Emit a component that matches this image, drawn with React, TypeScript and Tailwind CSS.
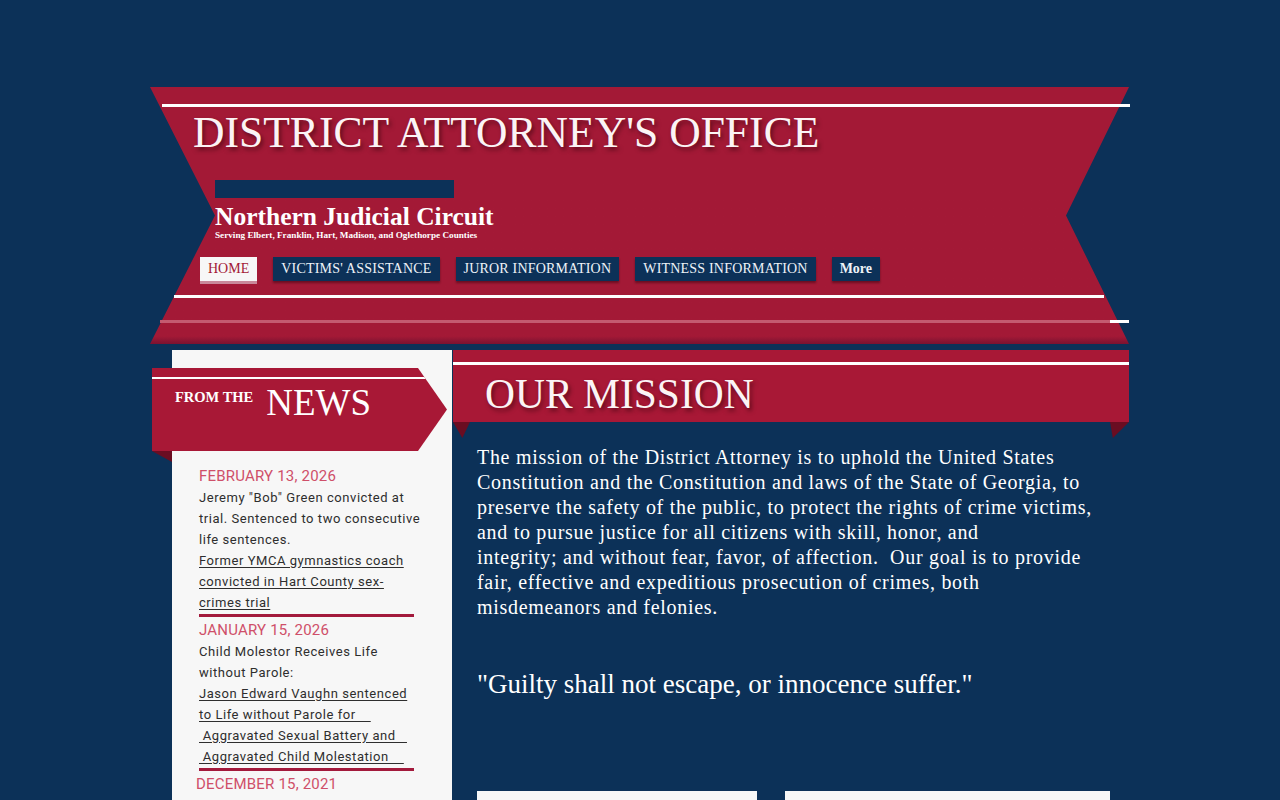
const serif = "[font-family:'Liberation_Serif','Times_New_Roman',serif]";
const sans = "[font-family:Roboto,'Liberation_Sans',sans-serif]";

type NewsItem = {
  date: string;
  body: string[];
  link: string[];
};

const NBSP = "\u00a0";

const news: NewsItem[] = [
  {
    date: "FEBRUARY 13, 2026",
    body: [
      'Jeremy "Bob" Green convicted at',
      "trial. Sentenced to two consecutive",
      "life sentences.",
    ],
    link: [
      "Former YMCA gymnastics coach",
      "convicted in Hart County sex-",
      "crimes trial",
    ],
  },
  {
    date: "JANUARY 15, 2026",
    body: ["Child Molestor Receives Life", "without Parole:"],
    link: [
      "Jason Edward Vaughn sentenced",
      "to Life without Parole for" + NBSP.repeat(4),
      NBSP + "Aggravated Sexual Battery and" + NBSP.repeat(3),
      NBSP + "Aggravated Child Molestation" + NBSP.repeat(4),
    ],
  },
];

const navItems = [
  "VICTIMS' ASSISTANCE",
  "JUROR INFORMATION",
  "WITNESS INFORMATION",
];

function Header() {
  return (
    <header className="relative h-[257px]">
      {/* ribbon shape */}
      <div className="absolute inset-0 bg-linear-to-b from-[#a31936] from-[97%] to-[#7a1230] [clip-path:polygon(0_0,100%_0,calc(100%_-_63px)_50%,100%_100%,0_100%,65px_50%)]" />
      <div className="relative pt-[17px]">
        <div className="ml-[12px] -mr-[1px] h-[3px] bg-white" />
        <h1
          className={`${serif} ml-[43px] mt-[4px] text-[43.6px] leading-none text-[#fbf4f5] [text-shadow:2px_3px_4px_rgba(40,0,10,0.55)]`}
        >
          DISTRICT ATTORNEY'S OFFICE
        </h1>
        <div className="ml-[65px] mt-[25px] h-[18px] w-[239px] bg-[#0c3158]" />
        <div
          className={`${serif} ml-[65px] mt-[6px] text-[25.5px] font-bold leading-none text-white`}
        >
          Northern Judicial Circuit
        </div>
        <div
          className={`${serif} ml-[65px] mt-[2px] text-[9.2px] font-bold leading-none text-white`}
        >
          Serving Elbert, Franklin, Hart, Madison, and Oglethorpe Counties
        </div>
        <nav className={`${serif} ml-[50px] mt-[17px] flex gap-4 text-[14px]`}>
          <a className="flex h-[24px] items-center bg-[#f7f7f7] px-2 leading-none text-[#a31936] shadow-[0_3px_0_#c9899a]">
            HOME
          </a>
          {navItems.map((item) => (
            <a
              key={item}
              className="flex h-[24px] items-center bg-[#0c3158] px-2 leading-none tracking-[0.2px] text-[#eef3f8] shadow-[0_2px_2px_rgba(40,0,10,0.45)]"
            >
              {item}
            </a>
          ))}
          <a className="flex h-[24px] items-center bg-[#0c3158] px-2 font-bold leading-none text-[#eef3f8] shadow-[0_2px_2px_rgba(40,0,10,0.45)]">
            More
          </a>
        </nav>
        <div className="ml-[24px] mr-[25px] mt-[14px] h-[3px] bg-white" />
        <div className="ml-[10px] mt-[22px] flex h-[3px]">
          <div className="flex-1 bg-[#c45a70]" />
          <div className="w-[19px] bg-white" />
        </div>
      </div>
    </header>
  );
}

function NewsPanel() {
  return (
    <aside className="ml-[22px] w-[280px] shrink-0 bg-[#f7f7f7] pb-[200px] pt-[18px]">
      <div className="relative -ml-5 h-[83px] w-[295px] bg-[#a81836] pt-[9px] [clip-path:polygon(0_0,266px_0,100%_50%,266px_100%,0_100%)]">
        <div className="h-[2px] bg-white" />
        <div className={`${serif} flex items-start pl-[23px] text-white`}>
          <span className="mt-[11px] text-[14.5px] font-bold leading-none">
            FROM THE
          </span>
          <span className="ml-[13px] mt-[5px] text-[37px] leading-none">
            NEWS
          </span>
        </div>
      </div>
      <div className="-ml-5 h-[11px] w-5 bg-[#6a0d22] [clip-path:polygon(0_0,100%_0,100%_100%)]" />

      <div className={`${sans} ml-[27px] mt-[3.5px] w-[240px]`}>
        {news.map((item) => (
          <div key={item.date}>
            <div className="text-[15px] leading-[21px] tracking-[0.2px] text-[#cf4f69]">
              {item.date}
            </div>
            {item.body.map((line) => (
              <div
                key={line}
                className="whitespace-pre text-[13px] leading-[21px] tracking-[0.55px] text-[#2e2e2e]"
              >
                {line}
              </div>
            ))}
            {item.link.map((line) => (
              <div
                key={line}
                className="whitespace-pre text-[13px] leading-[21px] tracking-[0.55px] text-[#2e2e2e]"
              >
                <span className="underline underline-offset-2">{line}</span>
              </div>
            ))}
            <div className="mb-[2.5px] mt-[1.5px] h-[3px] w-[215px] bg-[#a31a3c]" />
          </div>
        ))}
        <div className="-ml-[3px] text-[15px] leading-[21px] tracking-[0.2px] text-[#cf4f69]">
          DECEMBER 15, 2021
        </div>
      </div>
    </aside>
  );
}

function Mission() {
  return (
    <main className="ml-px w-[676px] shrink-0">
      <div className="h-[72px] bg-[#a81836] pt-[12px]">
        <div className="h-[3px] bg-white" />
        <h2
          className={`${serif} ml-[32px] mt-[9px] text-[41.5px] leading-none text-[#fbf4f5] [text-shadow:2px_3px_4px_rgba(40,0,10,0.55)]`}
        >
          OUR MISSION
        </h2>
      </div>
      <div className="flex h-[16px] justify-between">
        <div className="w-[17px] bg-[#6a0d22] [clip-path:polygon(0_0,100%_0,55%_100%)]" />
        <div className="w-[19px] bg-[#6a0d22] [clip-path:polygon(0_0,100%_0,15%_100%)]" />
      </div>

      <p
        className={`${serif} ml-[24px] mt-[6.5px] text-[20px] leading-[25px] tracking-[0.7px] text-white`}
      >
        The mission of the District Attorney is to uphold the United States
        <br />
        Constitution and the Constitution and laws of the State of Georgia, to
        <br />
        preserve the safety of the public, to protect the rights of crime victims,
        <br />
        and to pursue justice for all citizens with skill, honor, and
        <br />
        integrity; and without fear, favor, of affection.{NBSP} Our goal is to provide
        <br />
        fair, effective and expeditious prosecution of crimes, both
        <br />
        misdemeanors and felonies.
      </p>

      <p
        className={`${serif} ml-[24px] mt-[48.5px] text-[27px] leading-[32px] text-white`}
      >
        "Guilty shall not escape, or innocence suffer."
      </p>

      <div className="ml-[24px] mt-[91px] flex gap-[28px]">
        <div className="h-[100px] w-[280px] bg-[#f7f7f7]" />
        <div className="h-[100px] w-[325px] bg-[#f7f7f7]" />
      </div>
    </main>
  );
}

export default function App() {
  return (
    <div className="min-h-screen overflow-hidden bg-[#0c3158] pt-[87px]">
      <div className="ml-[150px] w-[979px]">
        <Header />
        <div className="mt-[6px] flex items-start">
          <NewsPanel />
          <Mission />
        </div>
      </div>
    </div>
  );
}
